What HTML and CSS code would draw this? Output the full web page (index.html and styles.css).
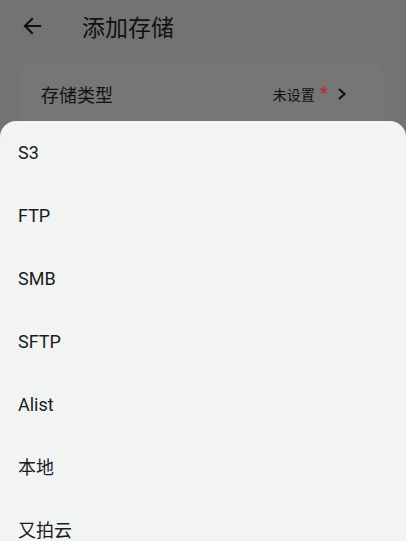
FILE: index.html
```html
<!DOCTYPE html>
<html lang="zh-CN">
<head>
    <meta charset="UTF-8">
    <meta name="viewport" content="width=device-width, initial-scale=1.0">
    <title>添加存储</title>
    <link rel="stylesheet" href="styles.css">
</head>
<body>
    <div class="page">
        <header class="appbar">
            <svg class="back" width="20" height="20" viewBox="0 0 20 20">
                <path d="M18 10H3M10 3L3 10L10 17" fill="none" stroke="#111" stroke-width="2.2" stroke-linecap="square"/>
            </svg>
            <h1 class="title">添加存储</h1>
        </header>

        <div class="card">
            <div class="row">
                <span class="lbl">存储类型</span>
                <span class="value">未设置</span>
                <span class="req">*</span>
                <svg class="chev" width="12" height="14" viewBox="0 0 12 14">
                    <path d="M3 2L8.5 7L3 12" fill="none" stroke="#111" stroke-width="2.2"/>
                </svg>
            </div>
        </div>
    </div>

    <div class="sheet">
        <ul class="options">
            <li>S3</li>
            <li>FTP</li>
            <li>SMB</li>
            <li>SFTP</li>
            <li>Alist</li>
            <li>本地</li>
            <li>又拍云</li>
        </ul>
    </div>
</body>
</html>
```

FILE: styles.css
```css
body {
    margin          : 0;
    background-color: #737373;
    font-family     : Roboto, "Noto Sans CJK SC", sans-serif;
    color           : #111111;
    overflow        : hidden;
}

.page {
    height: 541px;
}

.appbar {
    height      : 52px;
    display     : flex;
    align-items : center;
    padding-left: 22px;
}

.back {
    display: block;
}

.title {
    margin     : 0 0 0 40px;
    font-size  : 23px;
    font-weight: 400;
    font-family: "Noto Sans CJK SC", sans-serif;
}

.card {
    margin          : 12px 22px 0;
    background-color: #767676;
    border-radius   : 10px;
    height          : 80px;
}

.row {
    height     : 60px;
    display    : flex;
    align-items: center;
    padding    : 0 36px 0 19px;
}

.lbl {
    flex       : 1;
    font-size  : 18px;
    font-family: "Noto Sans CJK SC", sans-serif;
}

.value {
    font-size  : 14px;
    line-height: 1;
    font-family: "Noto Sans CJK SC", sans-serif;
}

.req {
    color      : #c0282a;
    font-size  : 19px;
    line-height: 1;
    margin     : -4px 0 0 5px;
}

.chev {
    margin-left: 8px;
}

.sheet {
    position        : fixed;
    top             : 121px;
    left            : 0;
    right           : 0;
    bottom          : 0;
    background-color: #f1f4f3;
    border-radius   : 16px 16px 0 0;
}

.options {
    list-style-type: none;
    margin         : 0;
    padding        : 0;
}

.options li {
    height      : 63px;
    line-height : 63px;
    padding-left: 18px;
    font-size   : 18px;
    color       : #1b1c1c;
}
```
